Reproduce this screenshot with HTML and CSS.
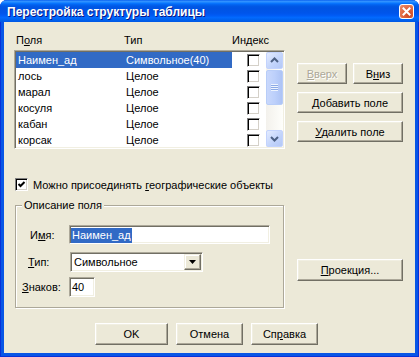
FILE: index.html
```html
<!DOCTYPE html>
<html lang="ru">
<head>
    <meta charset="UTF-8">
    <meta name="viewport" content="width=device-width, initial-scale=1.0">
    <title>Перестройка структуры таблицы</title>
    <link rel="stylesheet" href="styles.css">
</head>
<body>
    <div class="window">
        <div class="titlebar">
            <span class="title">Перестройка структуры таблицы</span>
            <span class="close-btn">
                <svg width="13" height="13" viewBox="0 0 13 13"><path d="M3.5 3.5 L9.5 9.5 M9.5 3.5 L3.5 9.5" stroke="#fff" stroke-width="2" stroke-linecap="square"/></svg>
            </span>
        </div>

        <div class="dialog">
            <div class="top">
                <div class="fields">
                    <div class="list-head">
                        <span>П<u>о</u>ля</span>
                        <span>Тип</span>
                        <span>Индекс</span>
                    </div>
                    <div class="listbox">
                        <div class="rows">
                            <div class="row selected">
                                <span class="cell">Наимен_ад</span>
                                <span class="cell">Символьное(40)</span>
                                <span class="cell idx"><span class="check"></span></span>
                            </div>
                            <div class="row">
                                <span class="cell">лось</span>
                                <span class="cell">Целое</span>
                                <span class="cell idx"><span class="check"></span></span>
                            </div>
                            <div class="row">
                                <span class="cell">марал</span>
                                <span class="cell">Целое</span>
                                <span class="cell idx"><span class="check"></span></span>
                            </div>
                            <div class="row">
                                <span class="cell">косуля</span>
                                <span class="cell">Целое</span>
                                <span class="cell idx"><span class="check"></span></span>
                            </div>
                            <div class="row">
                                <span class="cell">кабан</span>
                                <span class="cell">Целое</span>
                                <span class="cell idx"><span class="check"></span></span>
                            </div>
                            <div class="row">
                                <span class="cell">корсак</span>
                                <span class="cell">Целое</span>
                                <span class="cell idx"><span class="check"></span></span>
                            </div>
                        </div>
                        <div class="scrollbar">
                            <div class="sb-btn">
                                <svg width="15" height="15" viewBox="0 0 15 15"><path d="M4 9 L7.5 5.5 L11 9" fill="none" stroke="#4d6185" stroke-width="2"/></svg>
                            </div>
                            <div class="sb-track">
                                <div class="sb-thumb"><span class="grip"></span></div>
                            </div>
                            <div class="sb-btn">
                                <svg width="15" height="15" viewBox="0 0 15 15"><path d="M4 6 L7.5 9.5 L11 6" fill="none" stroke="#4d6185" stroke-width="2"/></svg>
                            </div>
                        </div>
                    </div>
                </div>

                <div class="side">
                    <div class="btn-pair">
                        <button class="btn half" disabled><u>В</u>верх</button>
                        <button class="btn half">В<u>н</u>из</button>
                    </div>
                    <button class="btn wide"><u>Д</u>обавить поле</button>
                    <button class="btn wide"><u>У</u>далить поле</button>
                </div>
            </div>

            <div class="geo-row">
                <span class="check checked">
                    <svg width="9" height="9" viewBox="0 0 9 9"><path d="M1.5 4 L3.5 6 L7.5 2" fill="none" stroke="#000" stroke-width="2"/></svg>
                </span>
                <span>Можно присоединять <u>г</u>еографические объекты</span>
            </div>

            <div class="bottom">
                <div class="groupbox">
                    <span class="legend">Описание поля</span>
                    <div class="field-row row-name">
                        <span class="flabel lbl-name">И<u>м</u>я:</span>
                        <div class="edit edit-name"><span class="sel">Наимен_ад</span></div>
                    </div>
                    <div class="field-row row-type">
                        <span class="flabel lbl-type"><u>Т</u>ип:</span>
                        <div class="edit combo">
                            <span class="combo-text">Символьное</span>
                            <span class="drop-btn">
                                <svg width="7" height="4" viewBox="0 0 7 4"><path d="M0 0 H7 L3.5 4 Z" fill="#000"/></svg>
                            </span>
                        </div>
                    </div>
                    <div class="field-row row-len">
                        <span class="flabel lbl-len"><u>З</u>наков:</span>
                        <div class="edit edit-len">40</div>
                    </div>
                </div>
                <button class="btn wide proj"><u>П</u>роекция...</button>
            </div>

            <div class="footer">
                <button class="btn ok">OK</button>
                <button class="btn cancel">Отмена</button>
                <button class="btn help">Сп<u>р</u>авка</button>
            </div>
        </div>
    </div>
</body>
</html>
```

FILE: styles.css
```css
* {
    margin: 0;
    padding: 0;
    box-sizing: border-box;
}

body {
    background: #fff;
    font-family: "Liberation Sans", Arial, sans-serif;
    font-size: 11px;
    color: #000;
}

u {
    text-decoration: underline;
    text-underline-offset: 1px;
}

.window {
    width: 419px;
    height: 357px;
    display: flex;
    flex-direction: column;
    background: #0856e6;
    border-radius: 7px 7px 0 0;
    overflow: hidden;
    box-shadow: inset 1px 0 #0831d9, inset -1px 0 #0831d9, inset 0 -1px #0831d9;
}

/* title bar */
.titlebar {
    height: 22px;
    flex: none;
    display: flex;
    justify-content: space-between;
    align-items: flex-start;
    padding: 0 5px 0 7px;
    background: linear-gradient(to bottom, #0058ee 0%, #3593ff 5%, #288eff 9%, #127dff 13%, #036ffc 17%, #0262ee 22%, #0057e5 30%, #0054e3 38%, #0055eb 60%, #005bf5 70%, #026afe 80%, #0062ef 90%, #0057e5 100%);
}

.title {
    color: #fff;
    font-weight: bold;
    font-size: 12px;
    line-height: 16px;
    margin-top: 4px;
    text-shadow: 1px 1px #0a1883;
}

.close-btn {
    width: 15px;
    height: 15px;
    margin-top: 4px;
    display: flex;
    align-items: center;
    justify-content: center;
    border: 1px solid #fff;
    border-radius: 3px;
    background: radial-gradient(circle at 70% 75%, #cc4622 0%, #e0643c 45%, #ec8f6e 100%);
}

/* dialog body */
.dialog {
    flex: 1;
    margin: 0 4px 4px;
    padding: 10px 0 0 10px;
    background: #ece9d8;
    display: flex;
    flex-direction: column;
}

.top {
    display: flex;
}

.fields {
    width: 271px;
}

.list-head {
    height: 18px;
    line-height: 16px;
    display: grid;
    grid-template-columns: 108px 108px auto;
    padding-left: 2px;
}

.listbox {
    height: 99px;
    display: flex;
    padding: 1px;
    background: #fff;
    border: 1px solid;
    border-color: #aca899 #fff #fff #aca899;
    box-shadow: inset 1px 1px #716f64, inset -1px -1px #f1efe2;
}

.rows {
    width: 250px;
    overflow: hidden;
}

.row {
    height: 16px;
    display: grid;
    grid-template-columns: 108px 108px 34px;
    align-items: center;
}

.cell {
    height: 16px;
    line-height: 16px;
    padding-left: 2px;
    white-space: nowrap;
}

.row.selected .cell:not(.idx) {
    background: #316ac5;
    color: #fff;
}

.cell.idx {
    padding-left: 15px;
    display: flex;
    align-items: center;
}

.check {
    width: 13px;
    height: 13px;
    display: inline-flex;
    align-items: center;
    justify-content: center;
    background: #fff;
    border: 1px solid;
    border-color: #808080 #fff #fff #808080;
    box-shadow: inset 1px 1px #000, inset -1px -1px #d4d0c8;
}

/* scroll bar */
.scrollbar {
    width: 17px;
    display: flex;
    flex-direction: column;
    background: linear-gradient(to right, #f3f1ec, #fefefb);
}

.sb-btn {
    height: 17px;
    flex: none;
    display: flex;
    align-items: center;
    justify-content: center;
    border: 1px solid #c3d3fd;
    border-radius: 2px;
    background: linear-gradient(135deg, #e3ebff 0%, #c1d3fb 60%, #b4c8f6 100%);
}

.sb-track {
    flex: 1;
    padding-top: 1px;
}

.sb-thumb {
    height: 35px;
    display: flex;
    align-items: center;
    justify-content: center;
    border: 1px solid #b8cdf8;
    border-radius: 2px;
    background: linear-gradient(to right, #c9d8fc 0%, #bdd0fb 50%, #adc3f5 100%);
}

.grip {
    width: 7px;
    height: 7px;
    background: repeating-linear-gradient(to bottom, #eef4fe 0, #eef4fe 1px, #8caae6 1px, #8caae6 2px);
}

/* right buttons */
.side {
    margin-left: 12px;
    padding-top: 31px;
    width: 106px;
    display: flex;
    flex-direction: column;
    gap: 8px;
}

.btn-pair {
    display: flex;
    justify-content: space-between;
}

.btn {
    height: 21px;
    background: #ece9d8;
    font-family: "Liberation Sans", Arial, sans-serif;
    font-size: 11px;
    color: #000;
    border: 1px solid;
    border-color: #fff #716f64 #716f64 #fff;
    box-shadow: inset -1px -1px #aca899, inset 1px 1px #f1efe2;
}

.btn.half {
    width: 50px;
}

.btn.wide {
    width: 106px;
}

.btn:disabled {
    color: #aca899;
    text-shadow: 1px 1px #fff;
}

/* checkbox row */
.geo-row {
    margin-top: 29px;
    margin-left: 1px;
    height: 13px;
    display: flex;
    align-items: center;
    gap: 5px;
}

/* field description group */
.bottom {
    margin-top: 14px;
    display: flex;
    align-items: flex-start;
}

.groupbox {
    position: relative;
    width: 269px;
    height: 103px;
    margin-left: 1px;
    padding-top: 19px;
    border: 1px solid #aca899;
    box-shadow: inset 1px 1px #fff, 1px 1px #fff;
}

.legend {
    position: absolute;
    top: -7px;
    left: 6px;
    padding: 0 2px;
    line-height: 13px;
    background: #ece9d8;
}

.field-row {
    display: flex;
    align-items: center;
}

.row-type {
    margin-top: 8px;
}

.row-len {
    margin-top: 5px;
}

.flabel {
    width: 53px;
}

.lbl-name {
    padding-left: 14px;
}

.lbl-type {
    padding-left: 12px;
}

.lbl-len {
    padding-left: 6px;
}

.edit {
    height: 20px;
    padding: 0 2px;
    line-height: 16px;
    background: #fff;
    border: 2px solid;
    border-color: #aca899 #fff #fff #aca899;
    box-shadow: inset 1px 1px #716f64, inset -1px -1px #f1efe2;
}

.edit-name {
    width: 201px;
    height: 19px;
    border-width: 1px;
    padding: 1px;
}

.sel {
    display: inline-block;
    background: #316ac5;
    color: #fff;
    line-height: 15px;
    padding: 0 1px;
}

.combo {
    width: 133px;
    margin-left: 1px;
    border-width: 1px;
    padding: 1px 1px 1px 3px;
    display: flex;
    align-items: center;
    justify-content: space-between;
}

.drop-btn {
    width: 17px;
    height: 16px;
    display: flex;
    align-items: center;
    justify-content: center;
    background: #ece9d8;
    border: 1px solid;
    border-color: #f1efe2 #716f64 #716f64 #f1efe2;
    box-shadow: inset -1px -1px #aca899, inset 1px 1px #fff;
}

.edit-len {
    width: 26px;
    border-width: 1px;
    padding: 1px 2px;
}

.btn.proj {
    height: 22px;
    margin-left: 13px;
    margin-top: 54px;
}

/* dialog buttons */
.footer {
    margin-top: 15px;
    margin-left: 81px;
    display: flex;
    gap: 8px;
}

.footer .btn {
    height: 22px;
    width: 67px;
}

.footer .btn.ok {
    width: 73px;
}
```
